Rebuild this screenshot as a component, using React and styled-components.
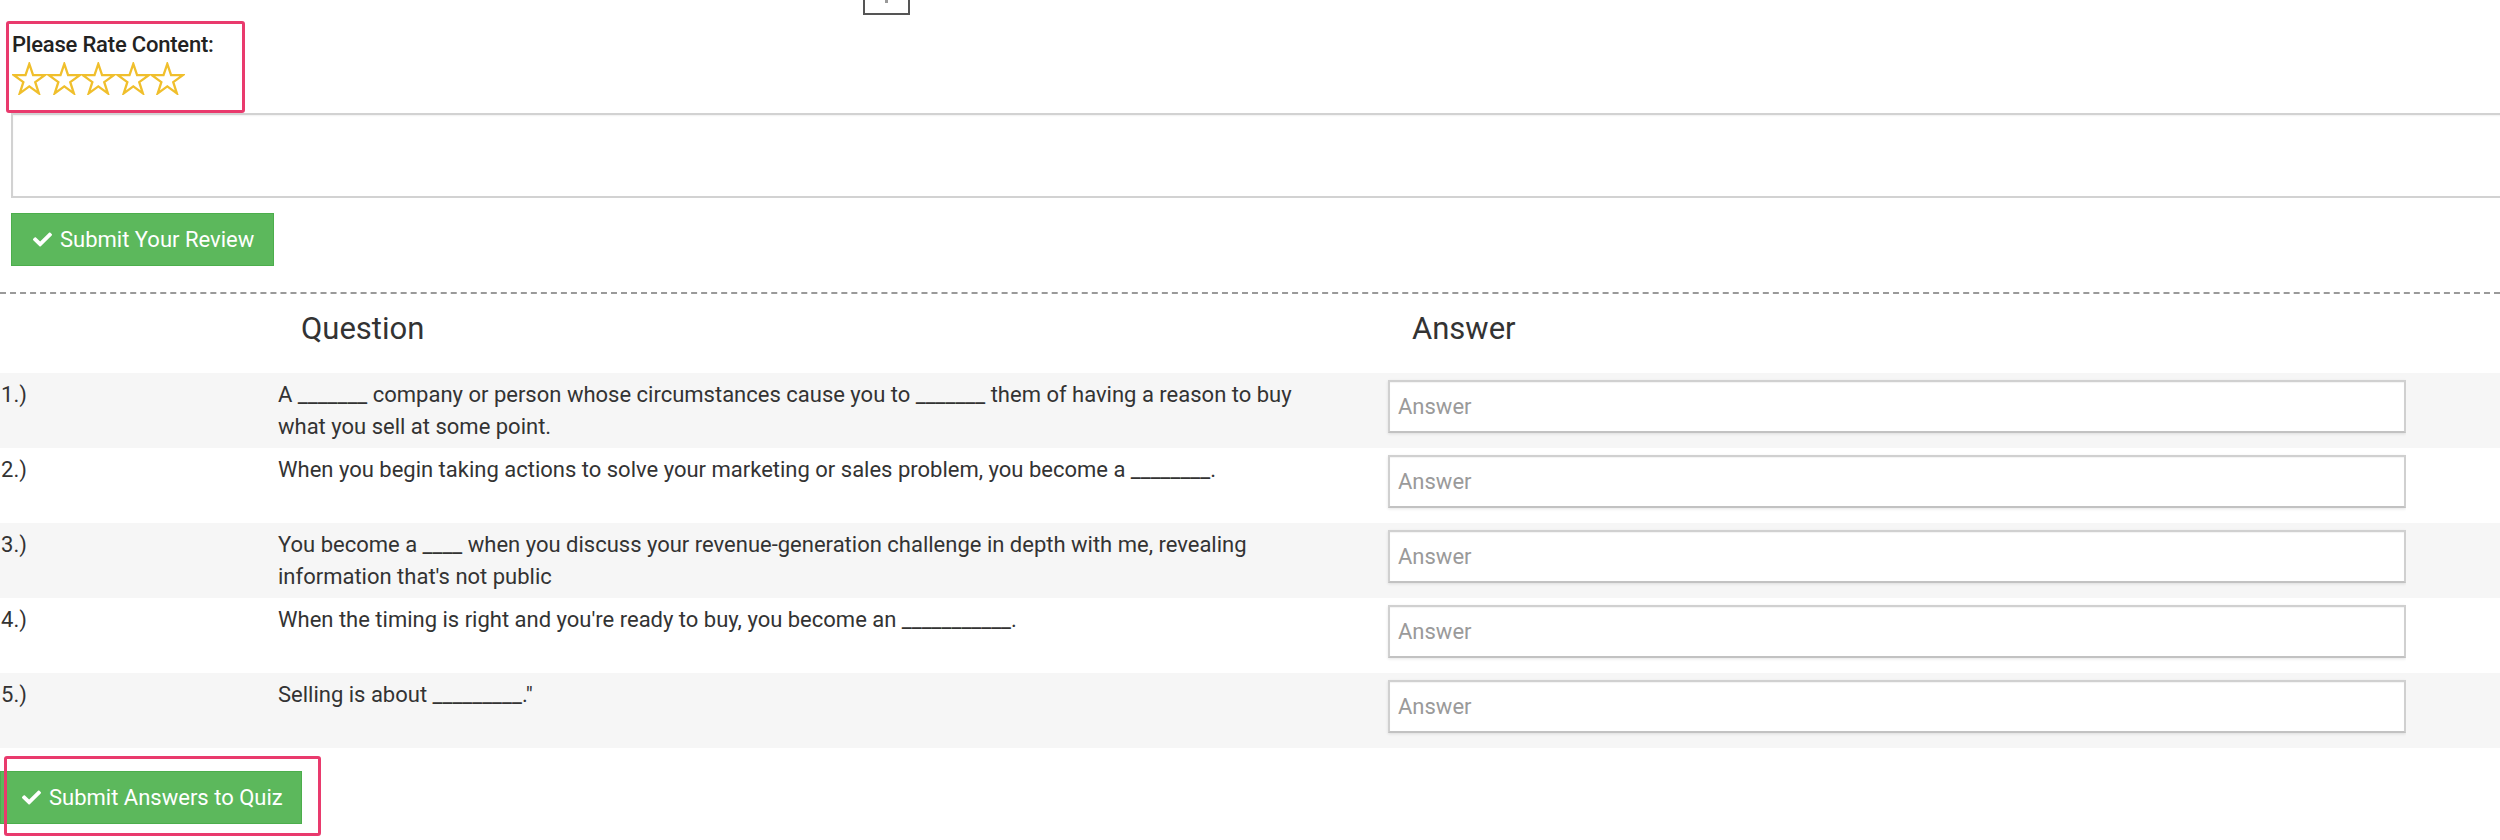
import React from "react";
import styled, { createGlobalStyle } from "styled-components";
import { FaCheck } from "react-icons/fa";

const GlobalStyle = createGlobalStyle`
  html, body { margin: 0; padding: 0; background: #ffffff; }
  body {
    font-family: Roboto, "Liberation Sans", Arial, sans-serif;
    color: #333333;
    overflow: hidden;
    width: 2500px;
    height: 840px;
  }
  * { box-sizing: border-box; }
`;

const Page = styled.div`
  width: 2500px;
  display: flex;
  flex-direction: column;
`;

const TopStrip = styled.div`
  height: 15px;
  display: flex;
  padding-left: 863px;
`;

const StubButton = styled.div`
  width: 47px;
  height: 15px;
  border: 2px solid #555;
  border-top: none;
  display: flex;
  justify-content: center;
  &::before {
    content: "";
    width: 3px;
    height: 3px;
    background: #999;
  }
`;

const RatingBlock = styled.div`
  position: relative;
  margin-top: 18px;
  padding-left: 12px;
  display: flex;
  flex-direction: column;
  gap: 5px;
`;

const Highlight = styled.div`
  position: absolute;
  left: ${(p) => p.$left}px;
  top: ${(p) => p.$top}px;
  width: ${(p) => p.$w}px;
  height: ${(p) => p.$h}px;
  border: 3px solid #e93a6d;
  border-radius: 3px;
  pointer-events: none;
`;

const RateLabel = styled.div`
  font-size: 22px;
  line-height: 24px;
  font-weight: 500;
  color: #222;
  letter-spacing: -0.2px;
`;

const Stars = styled.div`
  display: flex;
  height: 33px;
`;

const StarSvg = styled.svg`
  width: 34.6px;
  height: 33px;
  display: block;
`;

const Star = () => (
  <StarSvg viewBox="0 0 104 100">
    <polygon
      points="52,6 63.5,40 99,40 70,61 81,95 52,74 23,95 34,61 5,40 40.5,40"
      fill="none"
      stroke="#f0bf2c"
      strokeWidth="7"
      strokeLinejoin="miter"
    />
  </StarSvg>
);

const ReviewArea = styled.textarea`
  margin: 18px 0 0 11px;
  width: 2540px;
  height: 85px;
  border: 2px solid #d2d2d2;
  box-shadow: inset 0 1px 2px rgba(0, 0, 0, 0.06);
  resize: none;
  display: block;
  outline: none;
`;

const GreenButton = styled.button`
  display: flex;
  align-items: center;
  gap: 8px;
  height: 53px;
  width: ${(p) => p.$w}px;
  padding: 0 0 0 ${(p) => p.$pad}px;
  background: #5cb85c;
  border: 1px solid #4cae4c;
  border-radius: 0;
  color: #fff;
  font-family: Roboto, "Liberation Sans", Arial, sans-serif;
  font-size: 22px;
  font-weight: 400;
  white-space: nowrap;
  cursor: pointer;
  svg { width: 19px; height: 19px; flex: none; }
`;

const ReviewButtonWrap = styled.div`
  margin: 15px 0 0 11px;
  display: flex;
`;

const Divider = styled.div`
  margin-top: 26px;
  border-top: 2px dashed #9a9a9a;
`;

const Grid = styled.div`
  display: grid;
  grid-template-columns: 278px 1110px 1018px 1fr;
`;

const HeadCell = styled.div`
  height: 79px;
  padding-top: 16px;
  padding-left: ${(p) => p.$pl || 0}px;
  font-size: 31px;
  line-height: 37px;
  font-weight: 400;
  color: #333;
`;

const Cell = styled.div`
  height: 75px;
  background: ${(p) => (p.$alt ? "#f6f6f6" : "#ffffff")};
  padding-top: 6px;
  padding-left: ${(p) => p.$pl || 0}px;
  font-size: 22px;
  line-height: 32px;
  color: #333;
`;

const InputCell = styled(Cell)`
  padding-top: 7px;
`;

const QuestionText = styled.div`
  width: 1040px;
`;

const AnswerInput = styled.input`
  display: block;
  width: 1018px;
  height: 53px;
  border: 2px solid #d0d0d0;
  border-bottom-color: #c2c2c2;
  box-shadow: 0 1px 3px rgba(0, 0, 0, 0.1), inset 0 1px 1px rgba(0, 0, 0, 0.05);
  background: #fff;
  padding: 0 8px;
  font-family: Roboto, "Liberation Sans", Arial, sans-serif;
  font-size: 22px;
  color: #333;
  outline: none;
  &::placeholder { color: #9a9a9a; }
`;

const QuizFooter = styled.div`
  position: relative;
  margin-top: 23px;
  display: flex;
`;

const questions = [
  "A _______ company or person whose circumstances cause you to _______ them of having a reason to buy what you sell at some point.",
  "When you begin taking actions to solve your marketing or sales problem, you become a ________.",
  "You become a ____ when you discuss your revenue-generation challenge in depth with me, revealing information that's not public",
  "When the timing is right and you're ready to buy, you become an ___________.",
  "Selling is about _________.\"",
];

export default function App() {
  return (
    <Page>
      <GlobalStyle />
      <TopStrip>
        <StubButton />
      </TopStrip>
      <RatingBlock>
        <Highlight $left={6} $top={-12} $w={239} $h={92} />
        <RateLabel>Please Rate Content:</RateLabel>
        <Stars>
          {[0, 1, 2, 3, 4].map((i) => (
            <Star key={i} />
          ))}
        </Stars>
      </RatingBlock>
      <ReviewArea />
      <ReviewButtonWrap>
        <GreenButton $w={263} $pad={21}>
          <FaCheck />
          Submit Your Review
        </GreenButton>
      </ReviewButtonWrap>
      <Divider />
      <Grid>
        <HeadCell />
        <HeadCell $pl={23}>Question</HeadCell>
        <HeadCell $pl={24}>Answer</HeadCell>
        <HeadCell />
        {questions.map((q, i) => {
          const alt = i % 2 === 0;
          return (
            <React.Fragment key={i}>
              <Cell $alt={alt} $pl={1}>{i + 1}.)</Cell>
              <Cell $alt={alt}>
                <QuestionText>{q}</QuestionText>
              </Cell>
              <InputCell $alt={alt}>
                <AnswerInput placeholder="Answer" />
              </InputCell>
              <Cell $alt={alt} />
            </React.Fragment>
          );
        })}
      </Grid>
      <QuizFooter>
        <GreenButton $w={302} $pad={21}>
          <FaCheck />
          Submit Answers to Quiz
        </GreenButton>
        <Highlight $left={4} $top={-15} $w={317} $h={80} />
      </QuizFooter>
    </Page>
  );
}
